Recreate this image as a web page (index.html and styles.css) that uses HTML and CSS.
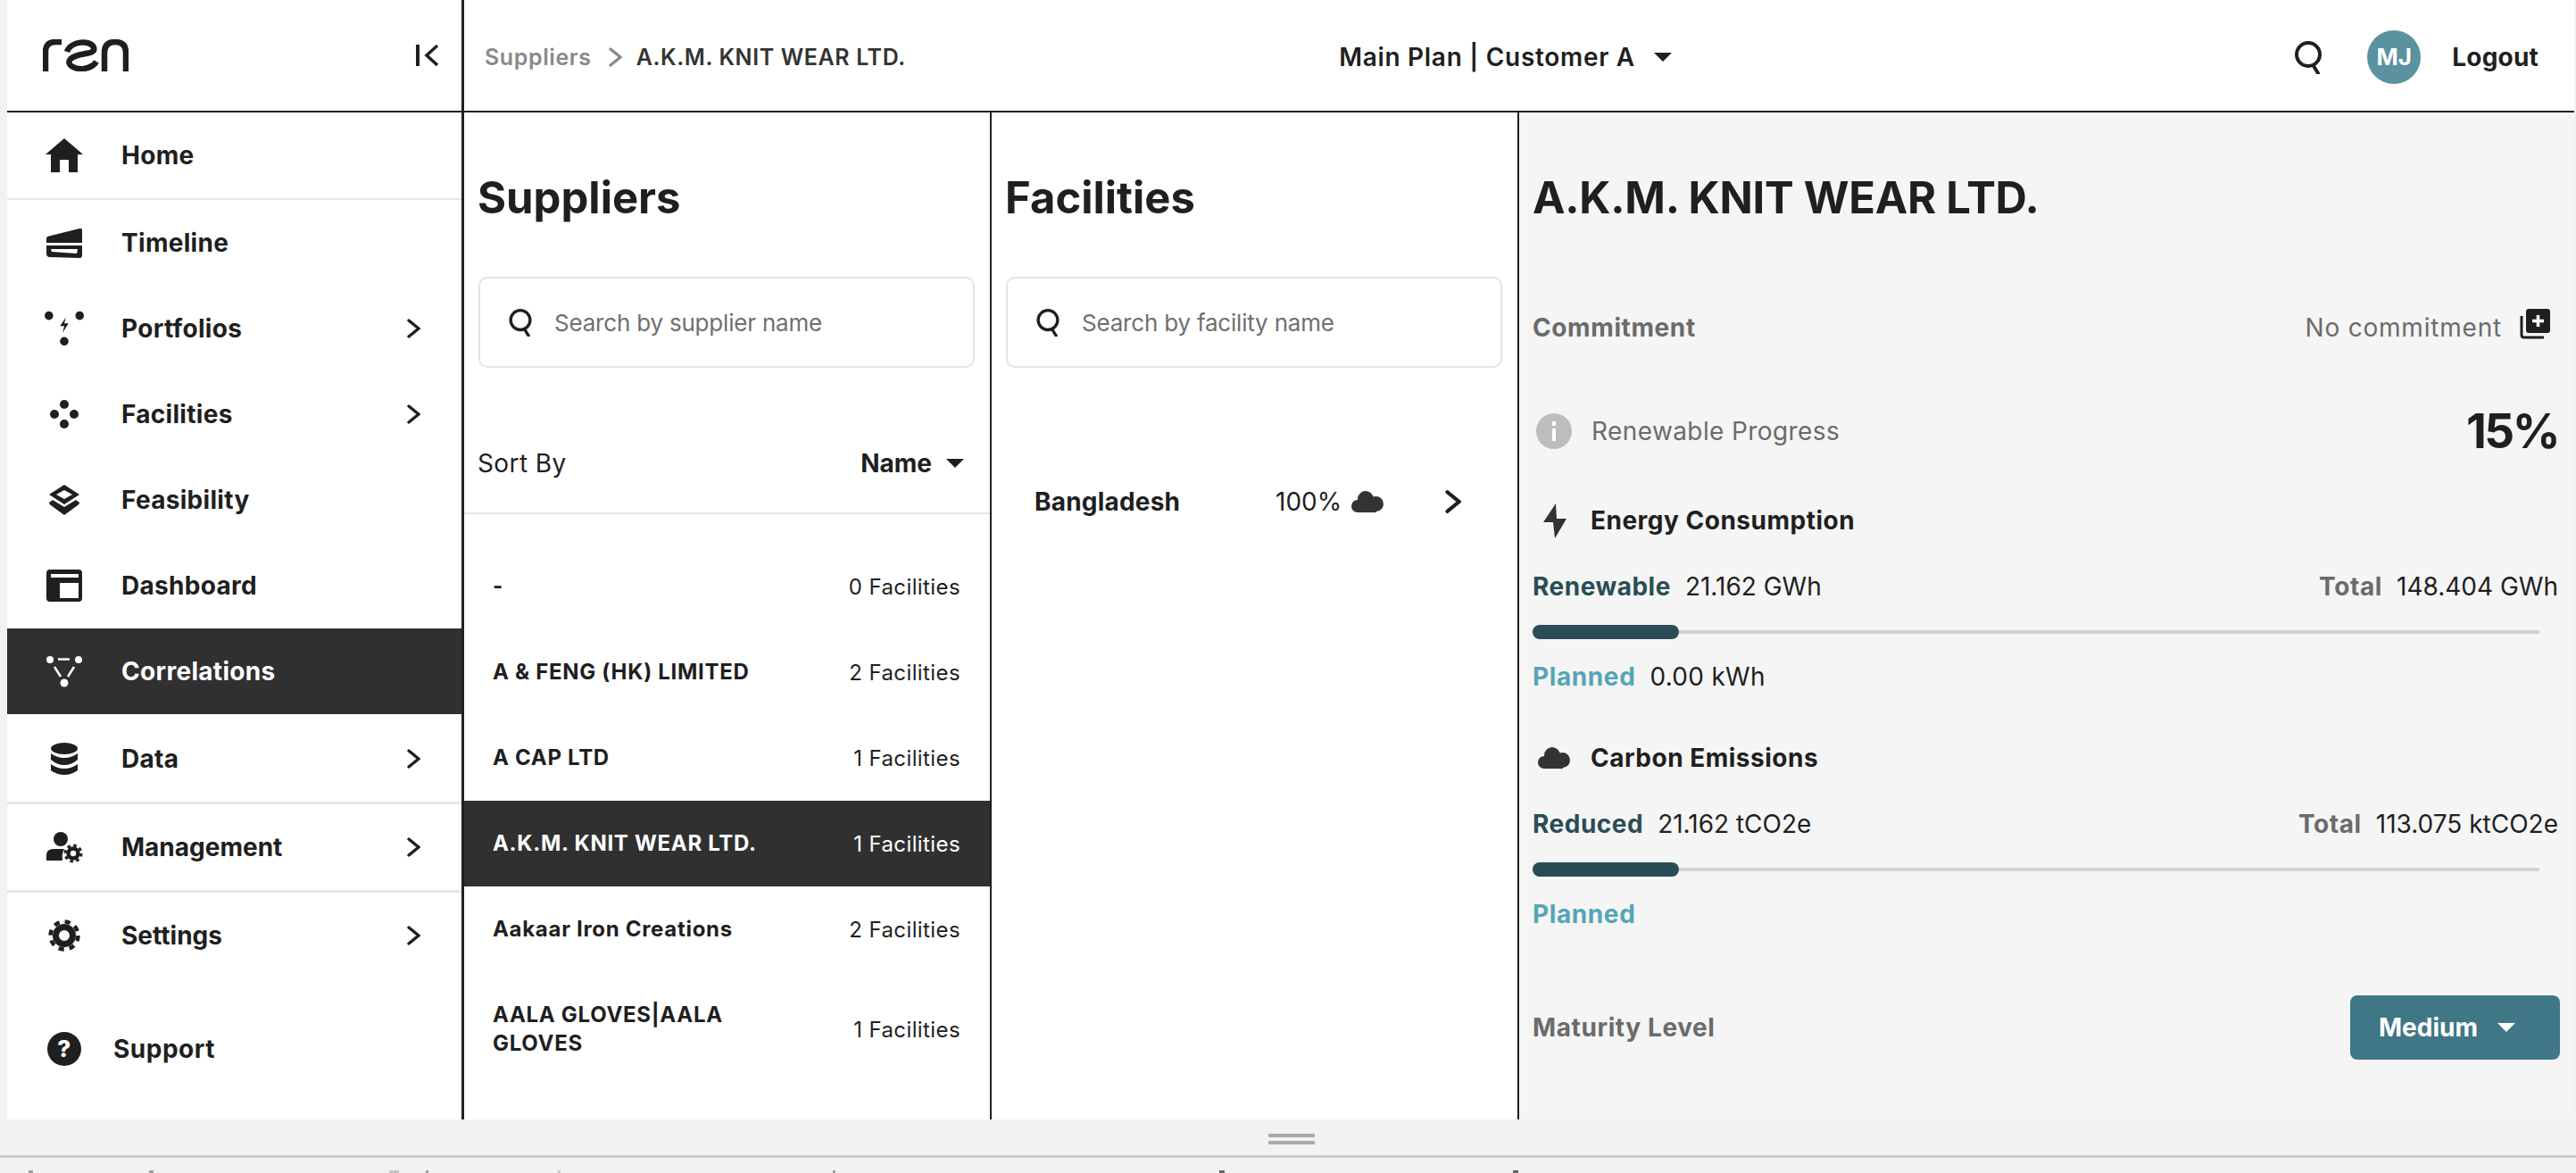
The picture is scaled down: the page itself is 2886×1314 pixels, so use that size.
FILE: index.html
```html
<!DOCTYPE html>
<html>
<head lang="en">
    <meta charset="UTF-8">
    <title>Suppliers</title>
    <link rel="stylesheet" href="styles.css">
</head>
<body>
<svg class="defs" width="0" height="0">
    <symbol id="chev" viewBox="0 0 15 22"><path d="M2 2 L13 11 L2 20" fill="none" stroke="currentColor" stroke-width="3.4" stroke-linecap="round" stroke-linejoin="miter"/></symbol>
    <symbol id="cloud" viewBox="0 0 36 24"><circle cx="7" cy="17" r="7"/><circle cx="16" cy="9" r="9"/><circle cx="27.500" cy="14.500" r="8.500"/><rect x="7" y="14" width="21" height="10"/></symbol>
    <symbol id="find" viewBox="0 0 30 37"><circle cx="15" cy="15" r="13" fill="none" stroke="currentColor" stroke-width="4"/><path d="M21 28 L26 36" fill="none" stroke="currentColor" stroke-width="4" stroke-linecap="round"/></symbol>
</svg>

<div class="app">
    <aside class="sidebar">
        <div class="brand">
            <svg class="logo" width="96" height="36" viewBox="0 0 96 36" fill="none" stroke="#1f1f1f" stroke-width="6.500">
                <path d="M3 36 V14 Q3 3 14 3 H21"/>
                <path d="M27 14 C31 2 53 0 57 9 C60 18 40 14 31 22 C25 29 37 34 46 33 C52 32 57 30 60 25"/>
                <path d="M69 36 V15 Q69 3 81 3 Q93 3 93 15 V36"/>
            </svg>
            <svg class="collapse" width="26" height="26" viewBox="0 0 26 26" fill="none" stroke="#1f1f1f" stroke-width="4">
                <path d="M2 1 V25"/>
                <path d="M24 2 L12 13 L24 24" stroke-width="3.500"/>
            </svg>
        </div>
        <ul class="menu">
            <li class="item home">
                <svg class="icon" width="44" height="38" viewBox="0 0 44 38"><path d="M22 0 L43 18 H37 V38 H27 V24 H17 V38 H7 V18 H1 Z"/></svg>
                <span>Home</span>
            </li>
            <li class="item">
                <svg class="icon" width="44" height="34" viewBox="0 0 44 34"><path d="M2 17 V12 Q2 10 5 9.500 L39 1 Q42 0 42 3 V17 Z"/><path fill-rule="evenodd" d="M2 20 H42 V31 Q42 34 39 34 L6 33 Q2 33 2 29 Z M7 24 L8 27 L36 29 L37 24 Z"/></svg>
                <span>Timeline</span>
            </li>
            <li class="item">
                <svg class="icon" width="46" height="42" viewBox="0 0 46 42"><circle cx="5" cy="6" r="5"/><circle cx="41" cy="6" r="5"/><circle cx="23" cy="36" r="5"/><path d="M25 8 L18 18 H23 L21 26 L28 15 H23 Z"/></svg>
                <span>Portfolios</span>
                <svg class="arrow" width="15" height="22"><use href="#chev"/></svg>
            </li>
            <li class="item">
                <svg class="icon" width="44" height="34" viewBox="0 0 44 34"><circle cx="22" cy="6" r="5"/><circle cx="22" cy="28" r="5"/><circle cx="11" cy="17" r="5"/><circle cx="33" cy="17" r="5"/></svg>
                <span>Facilities</span>
                <svg class="arrow" width="15" height="22"><use href="#chev"/></svg>
            </li>
            <li class="item">
                <svg class="icon" width="44" height="34" viewBox="0 0 44 34"><path fill-rule="evenodd" d="M22 0 L39 11 L22 22 L5 11 Z M22 6 L13 11 L22 16 L31 11 Z"/><path d="M9 17 L22 25 L35 17 L39 20 Q39 22 37 23 L22 34 L7 23 Q5 22 5 20 Z"/></svg>
                <span>Feasibility</span>
            </li>
            <li class="item">
                <svg class="icon" width="44" height="36" viewBox="0 0 44 36"><path fill-rule="evenodd" d="M6 0 H38 Q42 0 42 4 V32 Q42 36 38 36 H6 Q2 36 2 32 V4 Q2 0 6 0 Z M7 5 V9 H38 V5 Z M17 15 V32 H38 V15 Z"/></svg>
                <span>Dashboard</span>
            </li>
            <li class="item active">
                <svg class="icon" width="44" height="36" viewBox="0 0 44 36" fill="none" stroke="#fff" stroke-width="2.500"><circle cx="6" cy="5" r="4" fill="#fff" stroke="none"/><circle cx="38" cy="5" r="4" fill="#fff" stroke="none"/><circle cx="22" cy="31" r="4.500" fill="#fff" stroke="none"/><path d="M15 4.500 H28"/><path d="M11 13 L18 24"/><path d="M33 13 L26 24"/></svg>
                <span>Correlations</span>
            </li>
            <li class="item data">
                <svg class="icon" width="44" height="36" viewBox="0 0 44 36"><ellipse cx="22" cy="6.500" rx="15" ry="6.500"/><path d="M7 12 Q14 17 22 17 Q30 17 37 12 V19 Q30 25 22 25 Q14 25 7 19 Z"/><path d="M7 24 Q14 29 22 29 Q30 29 37 24 V31 Q30 36 22 36 Q14 36 7 31 Z"/></svg>
                <span>Data</span>
                <svg class="arrow" width="15" height="22"><use href="#chev"/></svg>
            </li>
            <li class="item ruled">
                <svg class="icon" width="44" height="35" viewBox="0 0 44 35"><circle cx="18" cy="8" r="8"/><path d="M2 32 V26 Q2 19 10 19 H22 Q19 24 20 32 Z"/><circle cx="32" cy="24" r="5.500" fill="none" stroke="#1f1f1f" stroke-width="4.500"/><circle cx="32" cy="24" r="9" fill="none" stroke="#1f1f1f" stroke-width="3" stroke-dasharray="3.500 3.570"/></svg>
                <span>Management</span>
                <svg class="arrow" width="15" height="22"><use href="#chev"/></svg>
            </li>
            <li class="item ruled">
                <svg class="icon" width="44" height="36" viewBox="0 0 44 36"><circle cx="22" cy="18" r="9.500" fill="none" stroke="#1f1f1f" stroke-width="7"/><circle cx="22" cy="18" r="15.500" fill="none" stroke="#1f1f1f" stroke-width="4.500" stroke-dasharray="6.200 6"/></svg>
                <span>Settings</span>
                <svg class="arrow" width="15" height="22"><use href="#chev"/></svg>
            </li>
        </ul>
        <div class="support">
            <span class="help">?</span>
            <span>Support</span>
        </div>
    </aside>

    <div class="main">
        <header class="topbar">
            <div class="crumbs">
                <span class="crumb-root">Suppliers</span>
                <svg class="crumb-sep" width="15" height="24"><use href="#chev"/></svg>
                <span class="crumb-now">A.K.M. KNIT WEAR LTD.</span>
            </div>
            <div class="plan">Main Plan | Customer A <i class="caret"></i></div>
            <div class="tools">
                <svg class="find-top" width="30" height="37"><use href="#find"/></svg>
                <span class="avatar">MJ</span>
                <span class="logout">Logout</span>
            </div>
        </header>

        <div class="panels">
            <section class="col">
                <h1 class="title">Suppliers</h1>
                <div class="search">
                    <svg width="26" height="31"><use href="#find"/></svg>
                    <span>Search by supplier name</span>
                </div>
                <div class="sort">
                    <span class="sort-label">Sort By</span>
                    <span class="sort-val">Name <i class="caret"></i></span>
                </div>
                <ul class="list">
                    <li class="row"><b>-</b><span>0 Facilities</span></li>
                    <li class="row"><b>A &amp; FENG (HK) LIMITED</b><span>2 Facilities</span></li>
                    <li class="row"><b>A CAP LTD</b><span>1 Facilities</span></li>
                    <li class="row selected"><b>A.K.M. KNIT WEAR LTD.</b><span>1 Facilities</span></li>
                    <li class="row"><b>Aakaar Iron Creations</b><span>2 Facilities</span></li>
                    <li class="row tall"><b>AALA GLOVES|AALA GLOVES</b><span>1 Facilities</span></li>
                </ul>
            </section>

            <section class="col">
                <h1 class="title">Facilities</h1>
                <div class="search">
                    <svg width="26" height="31"><use href="#find"/></svg>
                    <span>Search by facility name</span>
                </div>
                <div class="facility">
                    <b>Bangladesh</b>
                    <span class="share">100%</span>
                    <svg class="cloud" width="36" height="24"><use href="#cloud"/></svg>
                    <svg class="fac-arrow" width="18" height="28"><use href="#chev"/></svg>
                </div>
            </section>

            <section class="detail">
                <h1 class="title">A.K.M. KNIT WEAR LTD.</h1>
                <div class="line commit">
                    <strong class="muted">Commitment</strong>
                    <div class="none">
                        <span>No commitment</span>
                        <svg width="34" height="34" viewBox="0 0 34 34"><path d="M2 8 V29 Q2 32 5 32 H27" fill="none" stroke="#1f1f1f" stroke-width="3"/><rect x="7" width="27" height="27" rx="3" fill="#1f1f1f"/><path d="M20.500 7 V20 M14 13.500 H27" stroke="#fff" stroke-width="3.500"/></svg>
                    </div>
                </div>
                <div class="line progress">
                    <div class="with-icon">
                        <span class="info"><i></i></span>
                        <span class="prog-label">Renewable Progress</span>
                    </div>
                    <b class="pct">15%</b>
                </div>
                <div class="metric energy">
                    <div class="with-icon head">
                        <span class="slot"><svg width="26" height="39" viewBox="0 0 26 39"><path d="M14 0 L0 21 H11 L13 39 L26 17 H15 Z" fill="#333"/></svg></span>
                        <b>Energy Consumption</b>
                    </div>
                    <div class="line vals">
                        <div><b class="deep">Renewable</b><span>21.162 GWh</span></div>
                        <div><b class="muted">Total</b><span>148.404 GWh</span></div>
                    </div>
                    <div class="bar"><div class="fill" style="width: 14.5%"></div></div>
                    <div class="planned"><b>Planned</b><span>0.00 kWh</span></div>
                </div>
                <div class="metric carbon">
                    <div class="with-icon head">
                        <span class="slot"><svg class="cloud" width="36" height="24"><use href="#cloud"/></svg></span>
                        <b>Carbon Emissions</b>
                    </div>
                    <div class="line vals">
                        <div><b class="deep">Reduced</b><span>21.162 tCO2e</span></div>
                        <div><b class="muted">Total</b><span>113.075 ktCO2e</span></div>
                    </div>
                    <div class="bar"><div class="fill" style="width: 14.5%"></div></div>
                    <div class="planned"><b>Planned</b></div>
                </div>
                <div class="line maturity">
                    <strong class="muted">Maturity Level</strong>
                    <div class="btn">Medium <i class="caret"></i></div>
                </div>
            </section>
        </div>
    </div>
</div>

<div class="grip"><i></i><i></i></div>
<div class="peek"></div>
</body>
</html>
```

FILE: styles.css
```css
* {
    margin: 0;
    padding: 0;
    box-sizing: border-box;
}

ul {
    list-style: none;
}

body {
    width: 2886px;
    height: 1314px;
    overflow: hidden;
    background-color: #f1f2f4;
    color: #1f1f1f;
    font-family: Inter, "Liberation Sans", sans-serif;
}

.defs {
    display: block;
    height: 0;
}

.app {
    display: flex;
    height: 1254px;
    margin: 0 2px 0 8px;
    background-color: #fff;
}

/* left menu */
.sidebar {
    width: 512px;
    flex: none;
    border-right: 3px solid #1f1f1f;
    display: flex;
    flex-direction: column;
}

.brand {
    height: 126px;
    border-bottom: 2px solid #1f1f1f;
    display: flex;
    align-items: center;
    justify-content: space-between;
    padding: 0 25px 0 40px;
}

.item {
    height: 96px;
    display: flex;
    align-items: center;
    font-size: 28px;
    font-weight: 700;
    letter-spacing: 0.3px;
    padding-left: 42px;
}

.item .icon {
    width: 44px;
    margin-right: 42px;
    fill: #1f1f1f;
}

.item span {
    flex: 1;
}

.arrow {
    margin-right: 46px;
    color: #1f1f1f;
}

.home {
    height: 98px;
    border-bottom: 2px solid #e6e6ea;
}

.active {
    background-color: #303030;
    color: #fff;
}

.data {
    height: 98px;
    padding-top: 2px;
}

.ruled {
    height: 99px;
    border-top: 3px solid #e6e6ea;
    letter-spacing: 0;
}

.support {
    display: flex;
    align-items: center;
    margin-top: 60px;
    padding-left: 45px;
    font-size: 28px;
    font-weight: 700;
    letter-spacing: 0.5px;
}

.help {
    width: 38px;
    height: 38px;
    border-radius: 50%;
    background-color: #1f1f1f;
    color: #fff;
    font-size: 26px;
    font-weight: 800;
    line-height: 38px;
    text-align: center;
    margin-right: 36px;
}

/* top bar */
.main {
    flex: 1;
    display: flex;
    flex-direction: column;
    min-width: 0;
}

.topbar {
    height: 126px;
    border-bottom: 2px solid #1f1f1f;
    display: grid;
    grid-template-columns: 1fr 1fr 1fr;
    align-items: center;
    padding: 4px 40px 0 23px;
}

.crumbs {
    display: flex;
    align-items: center;
    white-space: nowrap;
    font-size: 25px;
    font-weight: 600;
    letter-spacing: 0.6px;
}

.crumb-root {
    color: #8a8a8a;
}

.crumb-sep {
    margin: 0 16px 0 19px;
    color: #8a8a8a;
}

.crumb-now {
    color: #333;
}

.plan {
    font-size: 28px;
    font-weight: 600;
    letter-spacing: 0.7px;
    white-space: nowrap;
    justify-self: center;
    margin-right: 14px;
    display: flex;
    align-items: center;
}

.caret {
    display: inline-block;
    width: 0;
    height: 0;
    border-left: 10px solid transparent;
    border-right: 10px solid transparent;
    border-top: 10px solid #1f1f1f;
}

.plan .caret {
    margin-left: 21px;
}

.tools {
    display: flex;
    align-items: center;
    justify-content: flex-end;
}

.find-top {
    color: #1f1f1f;
}

.avatar {
    width: 60px;
    height: 60px;
    margin: 0 35px 0 51px;
    border-radius: 50%;
    background-color: #5a92a0;
    color: #fff;
    font-size: 26px;
    font-weight: 700;
    line-height: 60px;
    text-align: center;
}

.logout {
    font-size: 28px;
    font-weight: 700;
    letter-spacing: 0.2px;
}

/* columns */
.panels {
    flex: 1;
    display: flex;
    min-height: 0;
}

.col {
    width: 591px;
    flex: none;
    border-right: 2px solid #1f1f1f;
    overflow: hidden;
}

.title {
    height: 60px;
    margin: 66px 0 0 15px;
    font-size: 49px;
    font-weight: 700;
    line-height: 60px;
    white-space: nowrap;
}

.search {
    height: 102px;
    margin: 58px 17px 0 16px;
    padding-left: 32px;
    border: 2px solid #e4e4e4;
    border-radius: 10px;
    display: flex;
    align-items: center;
    color: #1f1f1f;
    font-size: 26px;
    letter-spacing: -0.2px;
}

.search span {
    margin-left: 25px;
    color: #6f6f6f;
}

.sort {
    height: 77px;
    margin-top: 87px;
    padding: 0 29px 36px 15px;
    border-bottom: 2px solid #e4e4e4;
    display: flex;
    align-items: center;
    justify-content: space-between;
    font-size: 28px;
}

.sort-label {
    letter-spacing: 0.4px;
}

.sort-val {
    font-weight: 700;
    display: flex;
    align-items: center;
}

.sort-val .caret {
    margin-left: 16px;
}

.list {
    margin-top: 33px;
}

.row {
    height: 96px;
    padding: 0 33px 0 32px;
    display: flex;
    align-items: center;
    justify-content: space-between;
    gap: 30px;
    font-size: 24px;
    letter-spacing: 0.4px;
}

.row b {
    max-width: 320px;
    font-weight: 700;
    letter-spacing: 0.7px;
    line-height: 32px;
}

.row span {
    flex: none;
}

.selected {
    background-color: #303030;
    color: #fff;
}

.tall {
    height: 128px;
}

.facility {
    height: 56px;
    margin-top: 122px;
    padding-left: 48px;
    display: flex;
    align-items: center;
    font-size: 28px;
}

.facility b {
    width: 270px;
    font-weight: 700;
    letter-spacing: 0.2px;
}

.facility .cloud {
    fill: #333;
}

.share {
    margin-right: 11px;
}

.fac-arrow {
    margin-left: 69px;
}

/* detail panel */
.detail {
    flex: 1;
    min-width: 0;
    background-color: #f5f5f5;
    padding: 0 18px 0 15px;
}

.detail .title {
    margin-left: 0;
    letter-spacing: -0.3px;
}

.line {
    display: flex;
    align-items: center;
    justify-content: space-between;
    font-size: 28px;
}

.muted {
    color: #6b6b6b;
    font-weight: 700;
    letter-spacing: 0.6px;
}

.commit {
    height: 40px;
    margin-top: 95px;
}

.none {
    display: flex;
    align-items: center;
    color: #6b6b6b;
    letter-spacing: 0.8px;
    padding-right: 9px;
}

.none svg {
    margin: -8px 0 0 20px;
}

.progress {
    height: 44px;
    margin-top: 74px;
}

.with-icon {
    display: flex;
    align-items: center;
}

.info {
    width: 40px;
    height: 40px;
    margin: 0 22px 0 4px;
    border-radius: 50%;
    background-color: #bdbdbd;
    position: relative;
}

.info i {
    position: absolute;
    left: 18px;
    top: 17px;
    width: 4px;
    height: 14px;
    background-color: #fff;
}

.info i::before {
    content: "";
    position: absolute;
    left: 0;
    top: -8px;
    width: 4px;
    height: 5px;
    background-color: #fff;
}

.prog-label {
    color: #6b6b6b;
    letter-spacing: 0.4px;
}

.pct {
    font-size: 53px;
    font-weight: 700;
    letter-spacing: -2.5px;
}

.head {
    height: 40px;
    font-size: 28px;
    letter-spacing: 0.5px;
}

.head b {
    font-weight: 700;
}

.slot {
    width: 65px;
    padding-left: 6px;
    display: flex;
    align-items: center;
    justify-content: flex-start;
    fill: #333;
}

.energy {
    margin-top: 58px;
}

.energy .slot {
    padding-left: 12px;
}

.carbon {
    margin-top: 55px;
}

.vals {
    height: 32px;
    margin-top: 38px;
}

.vals b {
    margin-right: 16px;
    font-weight: 700;
}

.vals .deep {
    letter-spacing: 0.5px;
}

.deep {
    color: #2a4d55;
}

.bar {
    height: 16px;
    margin: 27px 21px 0 0;
    background: linear-gradient(#d2d2d2, #d2d2d2) center / 100% 4px no-repeat;
}

.fill {
    height: 16px;
    border-radius: 8px;
    background-color: #2a4d55;
}

.planned {
    height: 32px;
    margin-top: 26px;
    font-size: 28px;
    letter-spacing: 0.3px;
    display: flex;
    align-items: center;
}

.planned b {
    margin-right: 16px;
    color: #55a5b5;
    font-weight: 700;
    letter-spacing: 0.6px;
}

.maturity {
    height: 72px;
    margin: 75px -2px 0 0;
}

.btn {
    width: 235px;
    height: 72px;
    padding-left: 32px;
    border-radius: 8px;
    background-color: #407786;
    color: #fff;
    font-weight: 700;
    display: flex;
    align-items: center;
}

.btn .caret {
    margin-left: 22px;
    border-top-color: #fff;
}

/* splitter under the page */
.grip {
    height: 43px;
    padding-top: 16px;
    border-bottom: 3px solid #cccdd0;
    display: flex;
    flex-direction: column;
    align-items: center;
    gap: 4px;
}

.grip i {
    width: 52px;
    height: 4px;
    margin-left: 8px;
    border-radius: 1px;
    background-color: #a9a9a9;
}

.peek {
    height: 17px;
    background:
        linear-gradient(#a0a0a0, #a0a0a0) 32px 14px / 5px 3px no-repeat,
        linear-gradient(#a0a0a0, #a0a0a0) 167px 14px / 5px 3px no-repeat,
        linear-gradient(#c4c4c4, #c4c4c4) 436px 14px / 11px 3px no-repeat,
        linear-gradient(#a0a0a0, #a0a0a0) 477px 14px / 3px 3px no-repeat,
        linear-gradient(#c4c4c4, #c4c4c4) 625px 14px / 3px 3px no-repeat,
        linear-gradient(#a0a0a0, #a0a0a0) 933px 14px / 3px 3px no-repeat,
        linear-gradient(#666, #666) 1366px 14px / 6px 3px no-repeat,
        linear-gradient(#666, #666) 1695px 14px / 6px 3px no-repeat;
}
```
